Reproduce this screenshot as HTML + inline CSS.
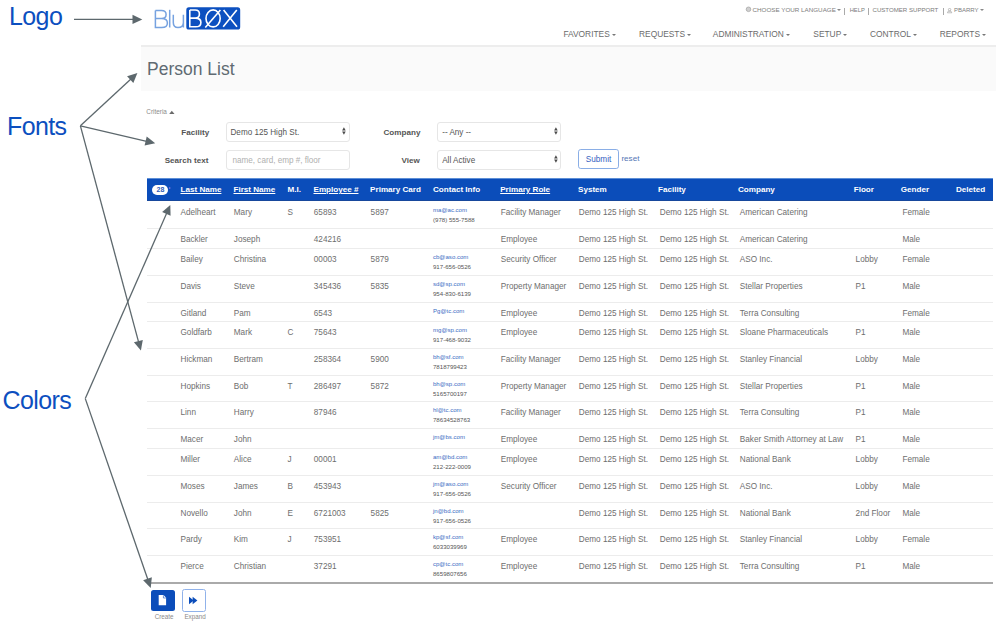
<!DOCTYPE html>
<html><head><meta charset="utf-8">
<style>
*{margin:0;padding:0;box-sizing:border-box}
html,body{width:996px;height:630px;overflow:hidden;background:#fff}
body{position:relative;font-family:"Liberation Sans",sans-serif;color:#666}
.abs{position:absolute;white-space:nowrap}
.ann{position:absolute;font-size:25px;color:#0c4fbf;line-height:1;letter-spacing:-0.6px;white-space:nowrap}
/* header */
.util{position:absolute;top:6.3px;font-size:6.1px;color:#7c7c7c;white-space:nowrap;line-height:8px}
.nav{position:absolute;top:29px;font-size:8.4px;color:#6b6b6b;white-space:nowrap;line-height:10px}
.caret{display:inline-block;width:0;height:0;border-left:2px solid transparent;border-right:2px solid transparent;border-top:2px solid #777;vertical-align:middle;margin-left:2px}
.sep{position:absolute;top:7.7px;width:1px;height:7px;background:#aaa}
.hline{position:absolute;left:141px;right:0;top:44px;height:1px;background:#e6e6e6}
.band{position:absolute;left:140.8px;right:0;top:45px;height:46.4px;background:#fafafa;border-top:2px solid #ededed}
.title{position:absolute;left:147px;top:58.8px;font-size:17.5px;color:#606a72;line-height:20px;white-space:nowrap}
.crit{position:absolute;left:146.3px;top:108px;font-size:6.4px;color:#8c8c8c;line-height:7px;white-space:nowrap}
.lbl{position:absolute;font-size:8.1px;font-weight:bold;color:#555;line-height:10px;white-space:nowrap}
.sel{position:absolute;height:19.9px;border:1.2px solid #e6e6e6;border-radius:3px;background:#fff;font-size:8.15px;color:#555;line-height:19px;padding-left:4px;white-space:nowrap}
.sel .arr{position:absolute;right:1.2px;top:3.3px}
.ph0{color:#aaa}
.btn{position:absolute;border:1.3px solid #8aaee6;border-radius:2.8px;color:#3562bf;font-size:8.2px;line-height:19.5px;text-align:center;background:#fff}
/* table */
.tbl{position:absolute;left:146.9px;top:178px;width:846.4px;height:406px}
.thead{position:absolute;left:0;top:0;width:846.4px;height:23px;background:#0b4dba;border-top:1px solid #5d8fd6;border-bottom:1px solid #17489c}
.h{position:absolute;top:6px;font-size:8.1px;font-weight:bold;color:#fff;line-height:10px;white-space:nowrap}
.h.u{text-decoration:underline}
.badge{position:absolute;left:5.5px;top:5.9px;width:16px;height:10.6px;border-radius:5.3px;background:#fff;color:#2d5cb8;font-size:7px;font-weight:bold;line-height:10.6px;text-align:center}
.sorti{position:absolute;left:22.3px;top:7.6px;width:0;height:0;border-top:1.3px solid transparent;border-bottom:1.3px solid transparent;border-left:2px solid #8a7ae8}
.row{position:absolute;left:0;width:846.4px;border-top:1px solid #ececec}
.row.first{border-top-color:transparent}
.row.last{border-bottom:2px solid #aaaaaa}
.t{position:absolute;top:6px;font-size:8.2px;color:#6e6e6e;line-height:10px;white-space:nowrap}
.em{position:absolute;top:5.3px;font-size:6.05px;color:#3a6cc4;line-height:7px;white-space:nowrap}
.ph{position:absolute;top:13.6px;font-size:6.1px;color:#555;line-height:7px;white-space:nowrap}
.fbtn{position:absolute;top:589.6px;width:24px;height:21.6px;border-radius:2.5px}
.flbl{position:absolute;top:612.9px;font-size:6.3px;color:#8a8a8a;line-height:7px;white-space:nowrap}
</style></head>
<body>
<div class="ann" style="left:9px;top:4px">Logo</div>
<div class="ann" style="left:7px;top:114px">Fonts</div>
<div class="ann" style="left:2.5px;top:388.2px">Colors</div>

<!-- logo -->
<svg width="996" height="40" style="position:absolute;left:0;top:0" viewBox="0 0 996 40">
<g fill="none" stroke="#76a2e0" stroke-width="1.5">
<path d="M155.4,10.4 H161.5 C164.6,10.4 166.1,12.2 166.1,14.4 C166.1,16.6 164.4,18.4 161.5,18.4 H155.4 M161.5,18.4 C165.4,18.4 167.4,20.2 167.4,22.9 C167.4,25.7 165.3,27.5 161.8,27.5 H155.4 V10.4"/>
<path d="M169.7,9.8 V27.5"/>
<path d="M173.3,14.8 V22.6 C173.3,26 174.9,27.6 178,27.6 C181.4,27.6 183.4,25.6 183.4,22.6 M183.4,14.8 V27.5"/>
</g>
<rect x="186.3" y="7.3" width="53.9" height="22.2" rx="2.6" fill="#0c50c0"/>
<g fill="none" stroke="#fff" stroke-width="1.6">
<path d="M189.8,10 H195.2 C198,10 199.4,11.8 199.4,14 C199.4,16.3 197.8,18.1 195.2,18.1 H189.8 M195.2,18.1 C199,18.1 200.9,19.9 200.9,22.4 C200.9,25.1 198.9,26.8 195.6,26.8 H189.8 V10"/>
<ellipse cx="213.1" cy="18.4" rx="7.1" ry="8.5"/>
<path d="M205.3,27.4 L220.4,10"/>
<path d="M223.6,10 L237,26.8 M236.8,10 L223.2,26.8"/>
</g>
</svg>
<!-- utility -->
<svg width="10" height="10" style="position:absolute;left:745px;top:5px" viewBox="0 0 10 10"><circle cx="3.5" cy="4.3" r="2.3" fill="#d0d0d0" stroke="#a8a8a8" stroke-width="0.8"/></svg>
<div class="util" style="left:752.6px;font-size:6.25px">CHOOSE YOUR LANGUAGE</div>
<div class="util" style="left:837.3px"><span class="caret" style="border-top-color:#888;margin-left:0;vertical-align:1px"></span></div>
<div class="sep" style="left:844.3px"></div>
<div class="util" style="left:849.7px;font-size:5.8px">HELP</div>
<div class="sep" style="left:868.2px"></div>
<div class="util" style="left:872.5px">CUSTOMER SUPPORT</div>
<div class="sep" style="left:942.8px"></div>
<svg width="6" height="8" style="position:absolute;left:947px;top:7.5px" viewBox="0 0 6 8"><circle cx="2.6" cy="1.6" r="1.2" fill="none" stroke="#999" stroke-width="0.6"/><path d="M0.4,4.8 H4.8 M0.4,4.8 L1.2,3.2 H4 L4.8,4.8" fill="none" stroke="#999" stroke-width="0.6"/></svg>
<div class="util" style="left:954px;font-size:6px">PBARRY</div>
<div class="util" style="left:980.2px"><span class="caret" style="border-top-color:#888;margin-left:0;vertical-align:1px"></span></div>
<!-- nav -->
<div class="nav" style="left:563.4px">FAVORITES<span class="caret"></span></div>
<div class="nav" style="left:639px">REQUESTS<span class="caret"></span></div>
<div class="nav" style="left:712.8px">ADMINISTRATION<span class="caret"></span></div>
<div class="nav" style="left:813.3px">SETUP<span class="caret"></span></div>
<div class="nav" style="left:870px">CONTROL<span class="caret"></span></div>
<div class="nav" style="left:939.7px">REPORTS<span class="caret"></span></div>
<div class="band"></div>
<div class="title">Person List</div>

<div class="crit">Criteria</div><svg width="8" height="6" style="position:absolute;left:169.2px;top:110px" viewBox="0 0 8 6"><polygon points="0.2,3.9 2.8,0.8 5.5,3.9" fill="#6a6a6a"/></svg>
<div class="lbl" style="left:181.3px;top:128px">Facility</div>
<div class="lbl" style="left:164.7px;top:156px">Search text</div>
<div class="lbl" style="left:383.5px;top:128px">Company</div>
<div class="lbl" style="left:401.6px;top:156px">View</div>
<div class="sel" style="left:225.5px;top:122px;width:124px">Demo 125 High St.<svg class="arr" width="6" height="10" viewBox="0 0 6 10"><polygon points="1.1,4.4 2.9,1.2 4.7,4.4" fill="#4a4a4a"/><polygon points="1.1,5.6 2.9,8.8 4.7,5.6" fill="#4a4a4a"/></svg></div>
<div class="sel" style="left:225.5px;top:150.2px;width:124px;padding-left:6px"><span class="ph0" style="color:#b0b0b0">name, card, emp #, floor</span></div>
<div class="sel" style="left:437.2px;top:122px;width:124px">-- Any --<svg class="arr" width="6" height="10" viewBox="0 0 6 10"><polygon points="1.1,4.4 2.9,1.2 4.7,4.4" fill="#4a4a4a"/><polygon points="1.1,5.6 2.9,8.8 4.7,5.6" fill="#4a4a4a"/></svg></div>
<div class="sel" style="left:437.2px;top:150.2px;width:124px">All Active<svg class="arr" width="6" height="10" viewBox="0 0 6 10"><polygon points="1.1,4.4 2.9,1.2 4.7,4.4" fill="#4a4a4a"/><polygon points="1.1,5.6 2.9,8.8 4.7,5.6" fill="#4a4a4a"/></svg></div>
<div class="btn" style="left:578px;top:149.2px;width:41px;height:19.5px">Submit</div>
<div class="abs" style="left:621.4px;top:154px;font-size:8.1px;line-height:10px;color:#5576b5">reset</div>

<div class="tbl">
<div class="thead"><div class="badge">28</div><div class="sorti"></div><span class="h u" style="left:33.6px">Last Name</span><span class="h u" style="left:86.6px">First Name</span><span class="h" style="left:140.6px">M.I.</span><span class="h u" style="left:166.6px">Employee #</span><span class="h" style="left:223.2px">Primary Card</span><span class="h" style="left:286.1px">Contact Info</span><span class="h u" style="left:353.3px">Primary Role</span><span class="h" style="left:431.1px">System</span><span class="h" style="left:511.1px">Facility</span><span class="h" style="left:591.1px">Company</span><span class="h" style="left:706.8px">Floor</span><span class="h" style="left:753.9px">Gender</span><span class="h" style="left:809.0px">Deleted</span></div>
<div class="row first" style="top:23px;height:27px"><span class="t" style="left:33.6px">Adelheart</span><span class="t" style="left:86.9px">Mary</span><span class="t" style="left:140.6px">S</span><span class="t" style="left:166.9px">65893</span><span class="t" style="left:223.7px">5897</span><span class="em" style="left:286.1px">ma@ac.com</span><span class="ph" style="left:286.1px">(978) 555-7588</span><span class="t" style="left:353.9px">Facility Manager</span><span class="t" style="left:431.9px">Demo 125 High St.</span><span class="t" style="left:512.9px">Demo 125 High St.</span><span class="t" style="left:592.9px">American Catering</span><span class="t" style="left:755.5px">Female</span></div>
<div class="row" style="top:50px;height:20px"><span class="t" style="left:33.6px">Backler</span><span class="t" style="left:86.9px">Joseph</span><span class="t" style="left:166.9px">424216</span><span class="t" style="left:353.9px">Employee</span><span class="t" style="left:431.9px">Demo 125 High St.</span><span class="t" style="left:512.9px">Demo 125 High St.</span><span class="t" style="left:592.9px">American Catering</span><span class="t" style="left:755.5px">Male</span></div>
<div class="row" style="top:70px;height:27px"><span class="t" style="left:33.6px">Bailey</span><span class="t" style="left:86.9px">Christina</span><span class="t" style="left:166.9px">00003</span><span class="t" style="left:223.7px">5879</span><span class="em" style="left:286.1px">cb@aso.com</span><span class="ph" style="left:286.1px">917-656-0526</span><span class="t" style="left:353.9px">Security Officer</span><span class="t" style="left:431.9px">Demo 125 High St.</span><span class="t" style="left:512.9px">Demo 125 High St.</span><span class="t" style="left:592.9px">ASO Inc.</span><span class="t" style="left:708.7px">Lobby</span><span class="t" style="left:755.5px">Female</span></div>
<div class="row" style="top:97px;height:27px"><span class="t" style="left:33.6px">Davis</span><span class="t" style="left:86.9px">Steve</span><span class="t" style="left:166.9px">345436</span><span class="t" style="left:223.7px">5835</span><span class="em" style="left:286.1px">sd@sp.com</span><span class="ph" style="left:286.1px">954-830-6139</span><span class="t" style="left:353.9px">Property Manager</span><span class="t" style="left:431.9px">Demo 125 High St.</span><span class="t" style="left:512.9px">Demo 125 High St.</span><span class="t" style="left:592.9px">Stellar Properties</span><span class="t" style="left:708.7px">P1</span><span class="t" style="left:755.5px">Male</span></div>
<div class="row" style="top:124px;height:19px"><span class="t" style="left:33.6px">Gitland</span><span class="t" style="left:86.9px">Pam</span><span class="t" style="left:166.9px">6543</span><span class="em" style="left:286.1px">Pg@tc.com</span><span class="t" style="left:353.9px">Employee</span><span class="t" style="left:431.9px">Demo 125 High St.</span><span class="t" style="left:512.9px">Demo 125 High St.</span><span class="t" style="left:592.9px">Terra Consulting</span><span class="t" style="left:755.5px">Female</span></div>
<div class="row" style="top:143px;height:27px"><span class="t" style="left:33.6px">Goldfarb</span><span class="t" style="left:86.9px">Mark</span><span class="t" style="left:140.6px">C</span><span class="t" style="left:166.9px">75643</span><span class="em" style="left:286.1px">mg@sp.com</span><span class="ph" style="left:286.1px">917-468-9032</span><span class="t" style="left:353.9px">Employee</span><span class="t" style="left:431.9px">Demo 125 High St.</span><span class="t" style="left:512.9px">Demo 125 High St.</span><span class="t" style="left:592.9px">Sloane Pharmaceuticals</span><span class="t" style="left:708.7px">P1</span><span class="t" style="left:755.5px">Male</span></div>
<div class="row" style="top:170px;height:27px"><span class="t" style="left:33.6px">Hickman</span><span class="t" style="left:86.9px">Bertram</span><span class="t" style="left:166.9px">258364</span><span class="t" style="left:223.7px">5900</span><span class="em" style="left:286.1px">bh@sf.com</span><span class="ph" style="left:286.1px">7818799423</span><span class="t" style="left:353.9px">Facility Manager</span><span class="t" style="left:431.9px">Demo 125 High St.</span><span class="t" style="left:512.9px">Demo 125 High St.</span><span class="t" style="left:592.9px">Stanley Financial</span><span class="t" style="left:708.7px">Lobby</span><span class="t" style="left:755.5px">Male</span></div>
<div class="row" style="top:197px;height:26px"><span class="t" style="left:33.6px">Hopkins</span><span class="t" style="left:86.9px">Bob</span><span class="t" style="left:140.6px">T</span><span class="t" style="left:166.9px">286497</span><span class="t" style="left:223.7px">5872</span><span class="em" style="left:286.1px">bh@sp.com</span><span class="ph" style="left:286.1px">5165700197</span><span class="t" style="left:353.9px">Property Manager</span><span class="t" style="left:431.9px">Demo 125 High St.</span><span class="t" style="left:512.9px">Demo 125 High St.</span><span class="t" style="left:592.9px">Stellar Properties</span><span class="t" style="left:708.7px">P1</span><span class="t" style="left:755.5px">Male</span></div>
<div class="row" style="top:223px;height:27px"><span class="t" style="left:33.6px">Linn</span><span class="t" style="left:86.9px">Harry</span><span class="t" style="left:166.9px">87946</span><span class="em" style="left:286.1px">hl@tc.com</span><span class="ph" style="left:286.1px">78634528763</span><span class="t" style="left:353.9px">Facility Manager</span><span class="t" style="left:431.9px">Demo 125 High St.</span><span class="t" style="left:512.9px">Demo 125 High St.</span><span class="t" style="left:592.9px">Terra Consulting</span><span class="t" style="left:708.7px">P1</span><span class="t" style="left:755.5px">Male</span></div>
<div class="row" style="top:250px;height:20px"><span class="t" style="left:33.6px">Macer</span><span class="t" style="left:86.9px">John</span><span class="em" style="left:286.1px">jm@bs.com</span><span class="t" style="left:353.9px">Employee</span><span class="t" style="left:431.9px">Demo 125 High St.</span><span class="t" style="left:512.9px">Demo 125 High St.</span><span class="t" style="left:592.9px">Baker Smith Attorney at Law</span><span class="t" style="left:708.7px">P1</span><span class="t" style="left:755.5px">Male</span></div>
<div class="row" style="top:270px;height:27px"><span class="t" style="left:33.6px">Miller</span><span class="t" style="left:86.9px">Alice</span><span class="t" style="left:140.6px">J</span><span class="t" style="left:166.9px">00001</span><span class="em" style="left:286.1px">am@bd.com</span><span class="ph" style="left:286.1px">212-222-0009</span><span class="t" style="left:353.9px">Employee</span><span class="t" style="left:431.9px">Demo 125 High St.</span><span class="t" style="left:512.9px">Demo 125 High St.</span><span class="t" style="left:592.9px">National Bank</span><span class="t" style="left:708.7px">Lobby</span><span class="t" style="left:755.5px">Female</span></div>
<div class="row" style="top:297px;height:27px"><span class="t" style="left:33.6px">Moses</span><span class="t" style="left:86.9px">James</span><span class="t" style="left:140.6px">B</span><span class="t" style="left:166.9px">453943</span><span class="em" style="left:286.1px">jm@aso.com</span><span class="ph" style="left:286.1px">917-656-0526</span><span class="t" style="left:353.9px">Security Officer</span><span class="t" style="left:431.9px">Demo 125 High St.</span><span class="t" style="left:512.9px">Demo 125 High St.</span><span class="t" style="left:592.9px">ASO Inc.</span><span class="t" style="left:708.7px">Lobby</span><span class="t" style="left:755.5px">Male</span></div>
<div class="row" style="top:324px;height:26px"><span class="t" style="left:33.6px">Novello</span><span class="t" style="left:86.9px">John</span><span class="t" style="left:140.6px">E</span><span class="t" style="left:166.9px">6721003</span><span class="t" style="left:223.7px">5825</span><span class="em" style="left:286.1px">jn@bd.com</span><span class="ph" style="left:286.1px">917-656-0526</span><span class="t" style="left:431.9px">Demo 125 High St.</span><span class="t" style="left:512.9px">Demo 125 High St.</span><span class="t" style="left:592.9px">National Bank</span><span class="t" style="left:708.7px">2nd Floor</span><span class="t" style="left:755.5px">Male</span></div>
<div class="row" style="top:350px;height:27px"><span class="t" style="left:33.6px">Pardy</span><span class="t" style="left:86.9px">Kim</span><span class="t" style="left:140.6px">J</span><span class="t" style="left:166.9px">753951</span><span class="em" style="left:286.1px">kp@sf.com</span><span class="ph" style="left:286.1px">6033039969</span><span class="t" style="left:353.9px">Employee</span><span class="t" style="left:431.9px">Demo 125 High St.</span><span class="t" style="left:512.9px">Demo 125 High St.</span><span class="t" style="left:592.9px">Stanley Financial</span><span class="t" style="left:708.7px">Lobby</span><span class="t" style="left:755.5px">Female</span></div>
<div class="row last" style="top:377px;height:29px"><span class="t" style="left:33.6px">Pierce</span><span class="t" style="left:86.9px">Christian</span><span class="t" style="left:166.9px">37291</span><span class="em" style="left:286.1px">cp@tc.com</span><span class="ph" style="left:286.1px">8659807656</span><span class="t" style="left:353.9px">Employee</span><span class="t" style="left:431.9px">Demo 125 High St.</span><span class="t" style="left:512.9px">Demo 125 High St.</span><span class="t" style="left:592.9px">Terra Consulting</span><span class="t" style="left:708.7px">P1</span><span class="t" style="left:755.5px">Male</span></div>
</div>

<div class="fbtn" style="left:150.5px;top:589.7px;width:24px;height:21.5px;background:#0b4dba"></div>
<div class="fbtn" style="left:182px;top:589.4px;width:24.1px;height:22.2px;border:1.3px solid #90b2ea;background:#fff"></div>
<svg width="996" height="630" style="position:absolute;left:0;top:0" viewBox="0 0 996 630">
<polygon points="158.7,595 163.6,595 166.1,597.8 166.1,605.2 158.7,605.2" fill="#fff"/>
<polyline points="163.4,595.3 163.4,598 165.9,598" fill="none" stroke="#0b4dba" stroke-width="0.6"/>
<polygon points="189,596.7 193.8,600.45 189,604.2" fill="#0b4dba"/>
<polygon points="192.6,596.7 197.4,600.45 192.6,604.2" fill="#0b4dba"/>
</svg>
<div class="flbl" style="left:154.7px">Create</div>
<div class="flbl" style="left:184.4px">Expand</div>

<!-- arrows -->
<svg width="996" height="630" style="position:absolute;left:0;top:0" viewBox="0 0 996 630">
<g stroke="#5d686d" stroke-width="1.3" fill="none">
<line x1="74" y1="19.4" x2="133.50" y2="19.40"/>
<line x1="80.4" y1="125.8" x2="130.94" y2="78.98"/>
<line x1="80.4" y1="125.8" x2="146.63" y2="141.30"/>
<line x1="80.4" y1="125.8" x2="138.61" y2="342.10"/>
<line x1="85.3" y1="398.6" x2="166.76" y2="213.06"/>
<line x1="85.3" y1="398.6" x2="147.83" y2="579.58"/>
</g>
<g fill="#5d686d">
<polygon points="142.30,19.40 132.50,24.00 132.50,14.80"/>
<polygon points="137.40,73.00 133.34,83.03 127.08,76.29"/>
<polygon points="155.20,143.30 144.61,145.55 146.71,136.59"/>
<polygon points="140.90,350.60 133.91,342.33 142.80,339.94"/>
<polygon points="170.30,205.00 170.57,215.82 162.15,212.12"/>
<polygon points="150.70,587.90 143.15,580.14 151.85,577.14"/>
</g>
</svg>
</body></html>
